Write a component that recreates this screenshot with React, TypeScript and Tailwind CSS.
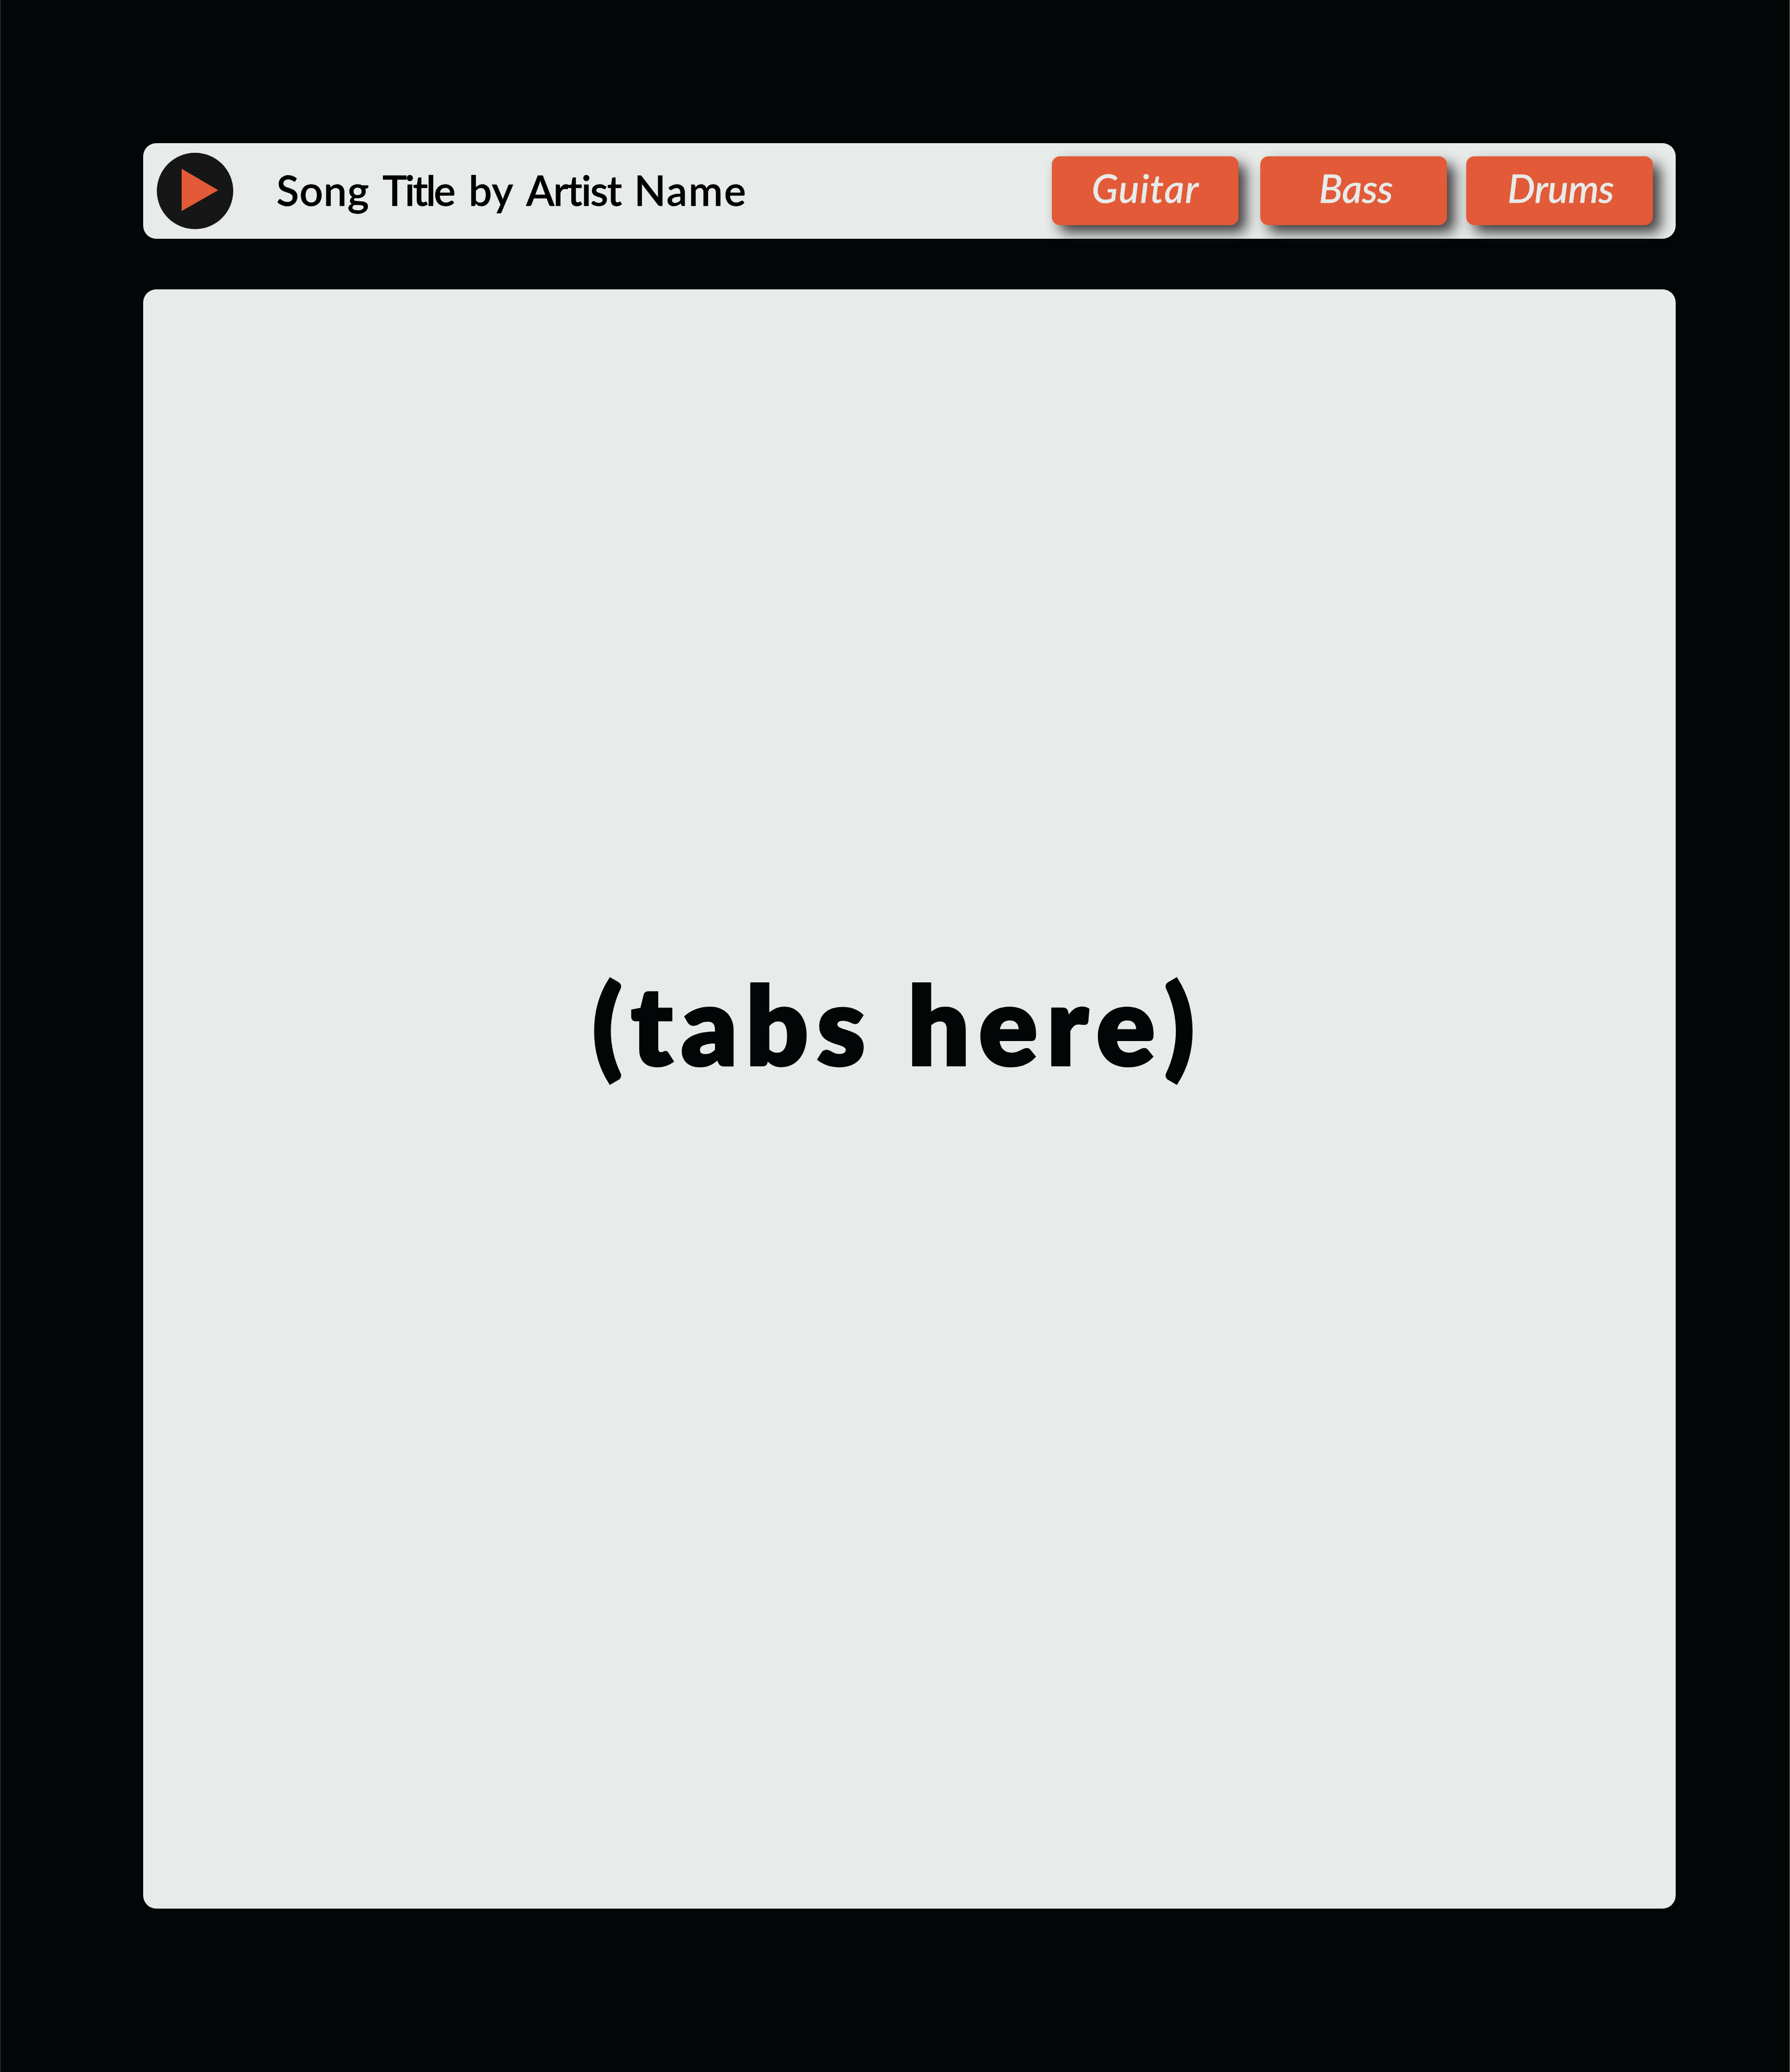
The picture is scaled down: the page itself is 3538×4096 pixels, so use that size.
type Word = { text: string; className: string };

const titleWords: Word[] = [
  { text: 'Song', className: 'w-[209.6px] tracking-[1px]' },
  { text: 'Title', className: 'w-[170.4px] tracking-[-4.3px]' },
  { text: 'by', className: 'w-[113.7px] tracking-[0.5px]' },
  { text: 'Artist', className: 'w-[213.4px] tracking-[-2.5px]' },
  { text: 'Name', className: 'tracking-[2.2px]' },
];

const instruments: Word[] = [
  { text: 'Guitar', className: 'ml-auto pl-[78.9px] tracking-[1.5px]' },
  { text: 'Bass', className: 'ml-[42.6px] pl-[116.4px] tracking-[-0.4px]' },
  { text: 'Drums', className: 'ml-[38px] pl-[81.8px] tracking-[-0.6px]' },
];

const placeholderWords: Word[] = [
  { text: '(', className: 'w-[76.8px]' },
  { text: 'tabs', className: 'w-[546.6px] tracking-[15.6px]' },
  { text: 'here', className: 'w-[507.1px] tracking-[17.2px]' },
  { text: ')', className: '' },
];

function PlayButton() {
  return (
    <button aria-label="Play" className="ml-[27.4px] size-[151px] shrink-0 rounded-full bg-[#161616]">
      <svg viewBox="0 0 151 151" className="size-full">
        <path d="M49 31.6 L121.3 73.9 L49 115.3 Z" fill="#e25a37" />
      </svg>
    </button>
  );
}

function Header() {
  return (
    <header className="flex h-[188.2px] items-center rounded-[26px] bg-[#e7ebea]">
      <PlayButton />
      <h1 className="ml-[84.8px] flex pb-[4.4px] text-[82px] leading-none font-semibold whitespace-nowrap text-black [-webkit-text-stroke:0.4px_#000]">
        {titleWords.map((word) => (
          <span key={word.text} className={word.className}>
            {word.text}{' '}
          </span>
        ))}
      </h1>
      <nav className="mr-[45.1px] flex grow">
        {instruments.map((item) => (
          <button
            key={item.text}
            className={`flex h-[136px] w-[369.3px] shrink-0 items-center rounded-[16px] bg-[#e25a37] pb-[11px] text-left text-[77px] leading-none font-medium text-[#e7ebea] italic shadow-[15px_15px_27px_rgba(35,31,32,0.85)] [-webkit-text-stroke:0.6px_#e7ebea] ${item.className}`}
          >
            {item.text}
          </button>
        ))}
      </nav>
    </header>
  );
}

export default function App() {
  return (
    <div className="flex h-[4096px] w-[3538px] flex-col overflow-hidden border-x border-l-[#414444] border-r-[#6b6b66] bg-[#020606] pt-[283.4px] pr-[224.6px] pl-[282px] font-['Lato',sans-serif]">
      <Header />
      <main className="mt-[100.8px] h-[3200.2px] rounded-[26px] bg-[#e7ebea] pt-[1342px] pl-[887px]">
        <p className="flex text-[217px] leading-none font-extrabold whitespace-nowrap text-[#020606] [-webkit-text-stroke:4px_#020606]">
          {placeholderWords.map((word) => (
            <span key={word.text} className={word.className}>
              {word.text}
            </span>
          ))}
        </p>
      </main>
    </div>
  );
}
